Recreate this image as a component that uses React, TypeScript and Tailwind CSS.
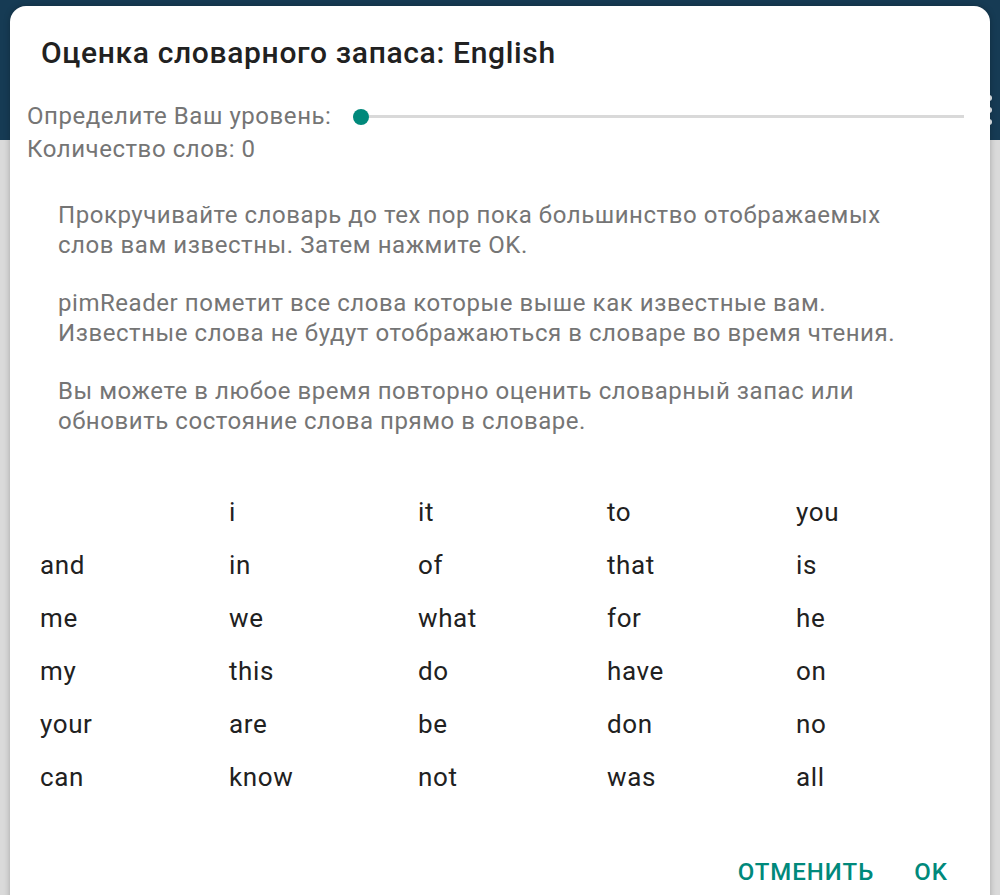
import React from "react";

const WORDS: string[] = [
  "", "i", "it", "to", "you",
  "and", "in", "of", "that", "is",
  "me", "we", "what", "for", "he",
  "my", "this", "do", "have", "on",
  "your", "are", "be", "don", "no",
  "can", "know", "not", "was", "all",
];

function LevelSlider() {
  return (
    <div className="relative flex-1 h-[33px] flex items-center ml-[22px] mr-[10px]">
      <div className="h-[3px] w-full bg-[#d9d9d9]" />
      <div className="absolute left-0 top-1/2 -translate-y-1/2 w-[16px] h-[16px] rounded-full bg-[#00897b]" />
    </div>
  );
}

export default function App() {
  return (
    <div
      className="relative w-[1000px] h-[895px] overflow-hidden flex flex-col"
      style={{ fontFamily: "Roboto, 'Noto Sans', sans-serif" }}
    >
      {/* app behind the dialog */}
      <div className="h-[140px] bg-[#163b54] relative">
        <div className="absolute left-[986px] top-[95px] flex flex-col gap-[6px]">
          <span className="w-[6px] h-[6px] rounded-full bg-[#e8edf1]" />
          <span className="w-[6px] h-[6px] rounded-full bg-[#e8edf1]" />
          <span className="w-[6px] h-[6px] rounded-full bg-[#e8edf1]" />
        </div>
      </div>
      <div className="flex-1 bg-[#dadada]" />

      {/* dialog */}
      <div className="absolute left-[10px] top-[6px] w-[980px] h-[920px] bg-white rounded-[16px] shadow-[0_0_6px_rgba(0,0,0,0.25)] flex flex-col">
        <h1 className="pt-[29px] pl-[31px] text-[30px] leading-[36px] tracking-[0.66px] font-medium text-[#212121]">
          Оценка словарного запаса: English
        </h1>

        <div className="mt-[29px] pl-[17px] pr-[16px] text-[24px] leading-[33px] tracking-[0.55px] text-[#757575]">
          <div className="flex items-center">
            <span className="whitespace-nowrap">Определите Ваш уровень:</span>
            <LevelSlider />
          </div>
          <div>Количество слов: 0</div>
        </div>

        <div className="mt-[34px] pl-[48px] text-[24px] leading-[30px] tracking-[0.55px] text-[#757575] flex flex-col gap-[28px]">
          <p className="whitespace-nowrap">
            Прокручивайте словарь до тех пор пока большинство отображаемых
            <br />
            слов вам известны. Затем нажмите OK.
          </p>
          <p className="whitespace-nowrap">
            pimReader пометит все слова которые выше как известные вам.
            <br />
            Известные слова не будут отображаються в словаре во время чтения.
          </p>
          <p className="whitespace-nowrap">
            Вы можете в любое время повторно оценить словарный запас или
            <br />
            обновить состояние слова прямо в словаре.
          </p>
        </div>

        <div className="mt-[50px] pl-[30px] grid grid-cols-[repeat(5,189px)] text-[26px] leading-[53px] tracking-[0.6px] text-[#212121]">
          {WORDS.map((w, i) => (
            <div key={i} className="h-[53px]">
              {w}
            </div>
          ))}
        </div>

        <div className="mt-[52px] flex justify-end items-center pr-[42px] gap-[40px] text-[24px] leading-[32px] font-medium text-[#00897b]">
          <button className="font-medium tracking-[1px]">ОТМЕНИТЬ</button>
          <button className="font-medium tracking-[1px]">OK</button>
        </div>
      </div>
    </div>
  );
}
